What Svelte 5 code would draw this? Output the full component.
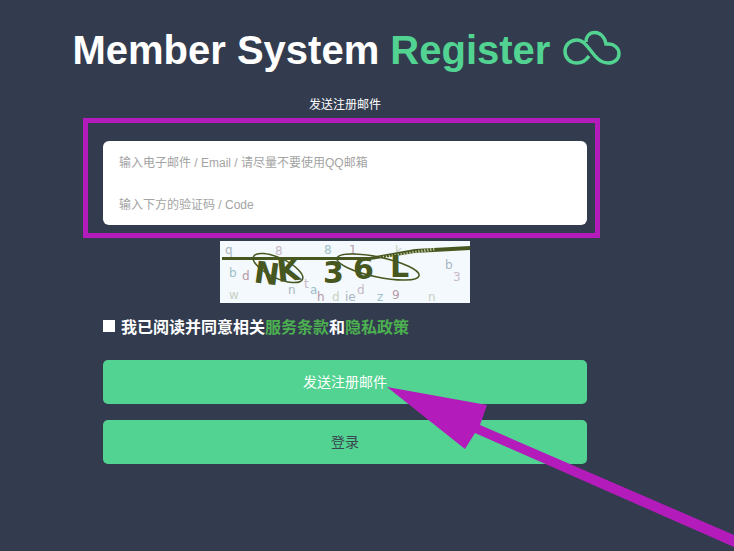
<script>
  const noise = [
    ['q', 5, 13], ['8', 55, 14], ['8', 104, 13], ['1', 129, 13], ['k', 175, 14],
    ['b', 225, 28], ['3', 233, 40], ['b', 9, 36], ['d', 22, 39], ['w', 9, 58], ['n', 68, 53],
    ['t', 84, 47], ['a', 90, 53], ['h', 97, 60], ['d', 112, 60], ['ie', 125, 60], ['d', 137, 53],
    ['z', 157, 60], ['9', 172, 58], ['n', 208, 60]
  ];
  const noiseColors = ['#a9b7c2', '#c9b8c8', '#9fc0c8', '#b79aa8', '#c8d0c4'];
</script>

<main class="page">
  <h1>Member System <span class="green">Register</span>
    <svg class="cloud" viewBox="0 0 60 36" width="60" height="36" aria-hidden="true">
      <path d="M15 33C8 33 3 28 3 21.500S8 10 15 10c12 0 16 23 31 23 6.500 0 11-4 11-9.500S52 14 47 14h-3C43 7 38 2.500 33 2.500 27 2.500 24 7 24 12" />
      <path d="M15 33c5 0 9-2.500 12-7" />
    </svg>
  </h1>

  <p class="subtitle">发送注册邮件</p>

  <form class="form" onsubmit={(e) => e.preventDefault()}>
    <div class="fields">
      <input type="email" placeholder="输入电子邮件 / Email / 请尽量不要使用QQ邮箱" />
      <input type="text" placeholder="输入下方的验证码 / Code" />
    </div>

    <svg class="captcha" viewBox="0 0 250 62" width="250" height="62" role="img" aria-label="验证码">
      <rect width="250" height="62" fill="#f3f9fc" />
      {#each noise as [ch, x, y], i}
        <text {x} {y} fill={noiseColors[i % noiseColors.length]} class="noise">{ch}</text>
      {/each}
      <path d="M2 16 L150 16 L195 8 L250 5 L250 9 L195 12 L150 19 L2 19 Z" fill="#46571f" />
      <path d="M160 17 L215 8" stroke="#dfe5c8" stroke-width="3" stroke-dasharray="1 2" fill="none" />
      <ellipse cx="58" cy="27" rx="27" ry="10" transform="rotate(25 58 27)" fill="none" stroke="#46571f" stroke-width="1.500" />
      <ellipse cx="158" cy="26" rx="42" ry="10" transform="rotate(12 158 26)" fill="none" stroke="#46571f" stroke-width="1.500" />
      <text x="33" y="41" class="code" transform="rotate(8 33 41)">N</text>
      <text x="58" y="41" class="code" transform="rotate(-6 58 41)">K</text>
      <text x="103" y="42" class="code">3</text>
      <text x="133" y="38" class="code">6</text>
      <text x="170" y="36" class="code">L</text>
    </svg>

    <label class="agree">
      <input type="checkbox" />
      <span>我已阅读并同意相关<a href="#terms">服务条款</a>和<a href="#privacy">隐私政策</a></span>
    </label>

    <button type="submit" class="btn primary">发送注册邮件</button>
    <button type="button" class="btn">登录</button>
  </form>
</main>

<div class="mark-box"></div>
<svg class="mark-arrow" viewBox="0 0 734 551" width="734" height="551" aria-hidden="true">
  <polygon points="387,387 487,405 480,425 734,535 734,547 475,433 465,449" fill="#b31bba" />
</svg>

<style>
  :global(body) {
    margin: 0;
    background: #333c4f;
    overflow: hidden;
  }
  .page {
    width: 690px;
    height: 551px;
    font-family: "Liberation Sans", "Noto Sans CJK SC", sans-serif;
    color: #fff;
    text-align: center;
  }
  h1 {
    margin: 0;
    padding: 28px 0 0 4px;
    height: 68px;
    font-size: 40px;
    line-height: 44px;
    font-weight: 700;
    white-space: nowrap;
  }
  .green { color: #52d391; }
  .cloud {
    vertical-align: -2px;
    fill: none;
    stroke: #52d391;
    stroke-width: 3.500;
  }
  .subtitle {
    margin: 0;
    font-size: 12px;
    line-height: 18px;
  }
  .form {
    width: 484px;
    margin: 28px auto 0;
  }
  .fields {
    background: #fff;
    border-radius: 6px;
    overflow: hidden;
    margin-top: -1px;
  }
  .fields input {
    display: block;
    width: 100%;
    height: 42px;
    box-sizing: border-box;
    border: 0;
    outline: 0;
    padding: 2px 16px 0;
    font: 12px "Liberation Sans", "Noto Sans CJK SC", sans-serif;
    background: transparent;
  }
  .fields input::placeholder { color: #a3a3a3; }
  .captcha {
    display: block;
    margin: 16px auto 0;
  }
  .noise {
    font: 12px "DejaVu Sans", sans-serif;
  }
  .code {
    font: 700 30px "DejaVu Sans", sans-serif;
    fill: #46571f;
  }
  .agree {
    display: flex;
    align-items: center;
    gap: 6px;
    margin-top: 12px;
    height: 22px;
    font-size: 16px;
    font-weight: 700;
    text-align: left;
  }
  .agree input {
    appearance: none;
    width: 12px;
    height: 12px;
    margin: 0;
    background: #fff;
  }
  .agree a {
    color: #4caf50;
    text-decoration: none;
  }
  .btn {
    display: block;
    width: 100%;
    height: 44px;
    margin-top: 16px;
    padding: 0 0 3px;
    border: 0;
    border-radius: 5px;
    background: #52d391;
    color: #3a4650;
    font: 14px "Liberation Sans", "Noto Sans CJK SC", sans-serif;
  }
  .btn.primary {
    margin-top: 23px;
    color: #fff;
  }
  /* annotations drawn over the page */
  .mark-box {
    position: absolute;
    left: 83px;
    top: 118px;
    width: 517px;
    height: 120px;
    box-sizing: border-box;
    border: 5px solid #b31bba;
  }
  .mark-arrow {
    position: absolute;
    left: 0;
    top: 0;
    pointer-events: none;
  }
</style>
